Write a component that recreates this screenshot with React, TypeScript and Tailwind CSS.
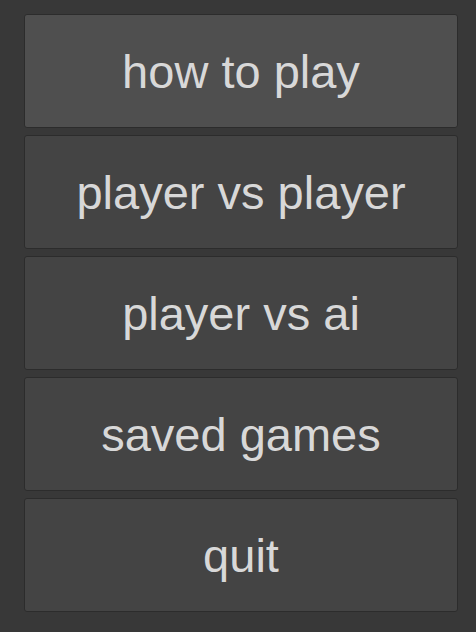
const items = ["how to play", "player vs player", "player vs ai", "saved games", "quit"];

export default function App() {
  return (
    <div className="min-h-[632px] w-[476px] bg-[#383838] pt-[14px] pl-[24px]">
      <div className="flex w-[434px] flex-col gap-[7px]">
        {items.map((label, i) => (
          <button
            key={label}
            className={
              "flex h-[114px] items-center justify-center rounded-[3px] border border-[#2c2c2c] text-[47px] leading-none text-[#d8d8d8] " +
              (i === 0 ? "bg-[#4f4f4f]" : "bg-[#444444]")
            }
            style={{ fontFamily: '"Liberation Sans", Arial, sans-serif' }}
          >
            {label}
          </button>
        ))}
      </div>
    </div>
  );
}
